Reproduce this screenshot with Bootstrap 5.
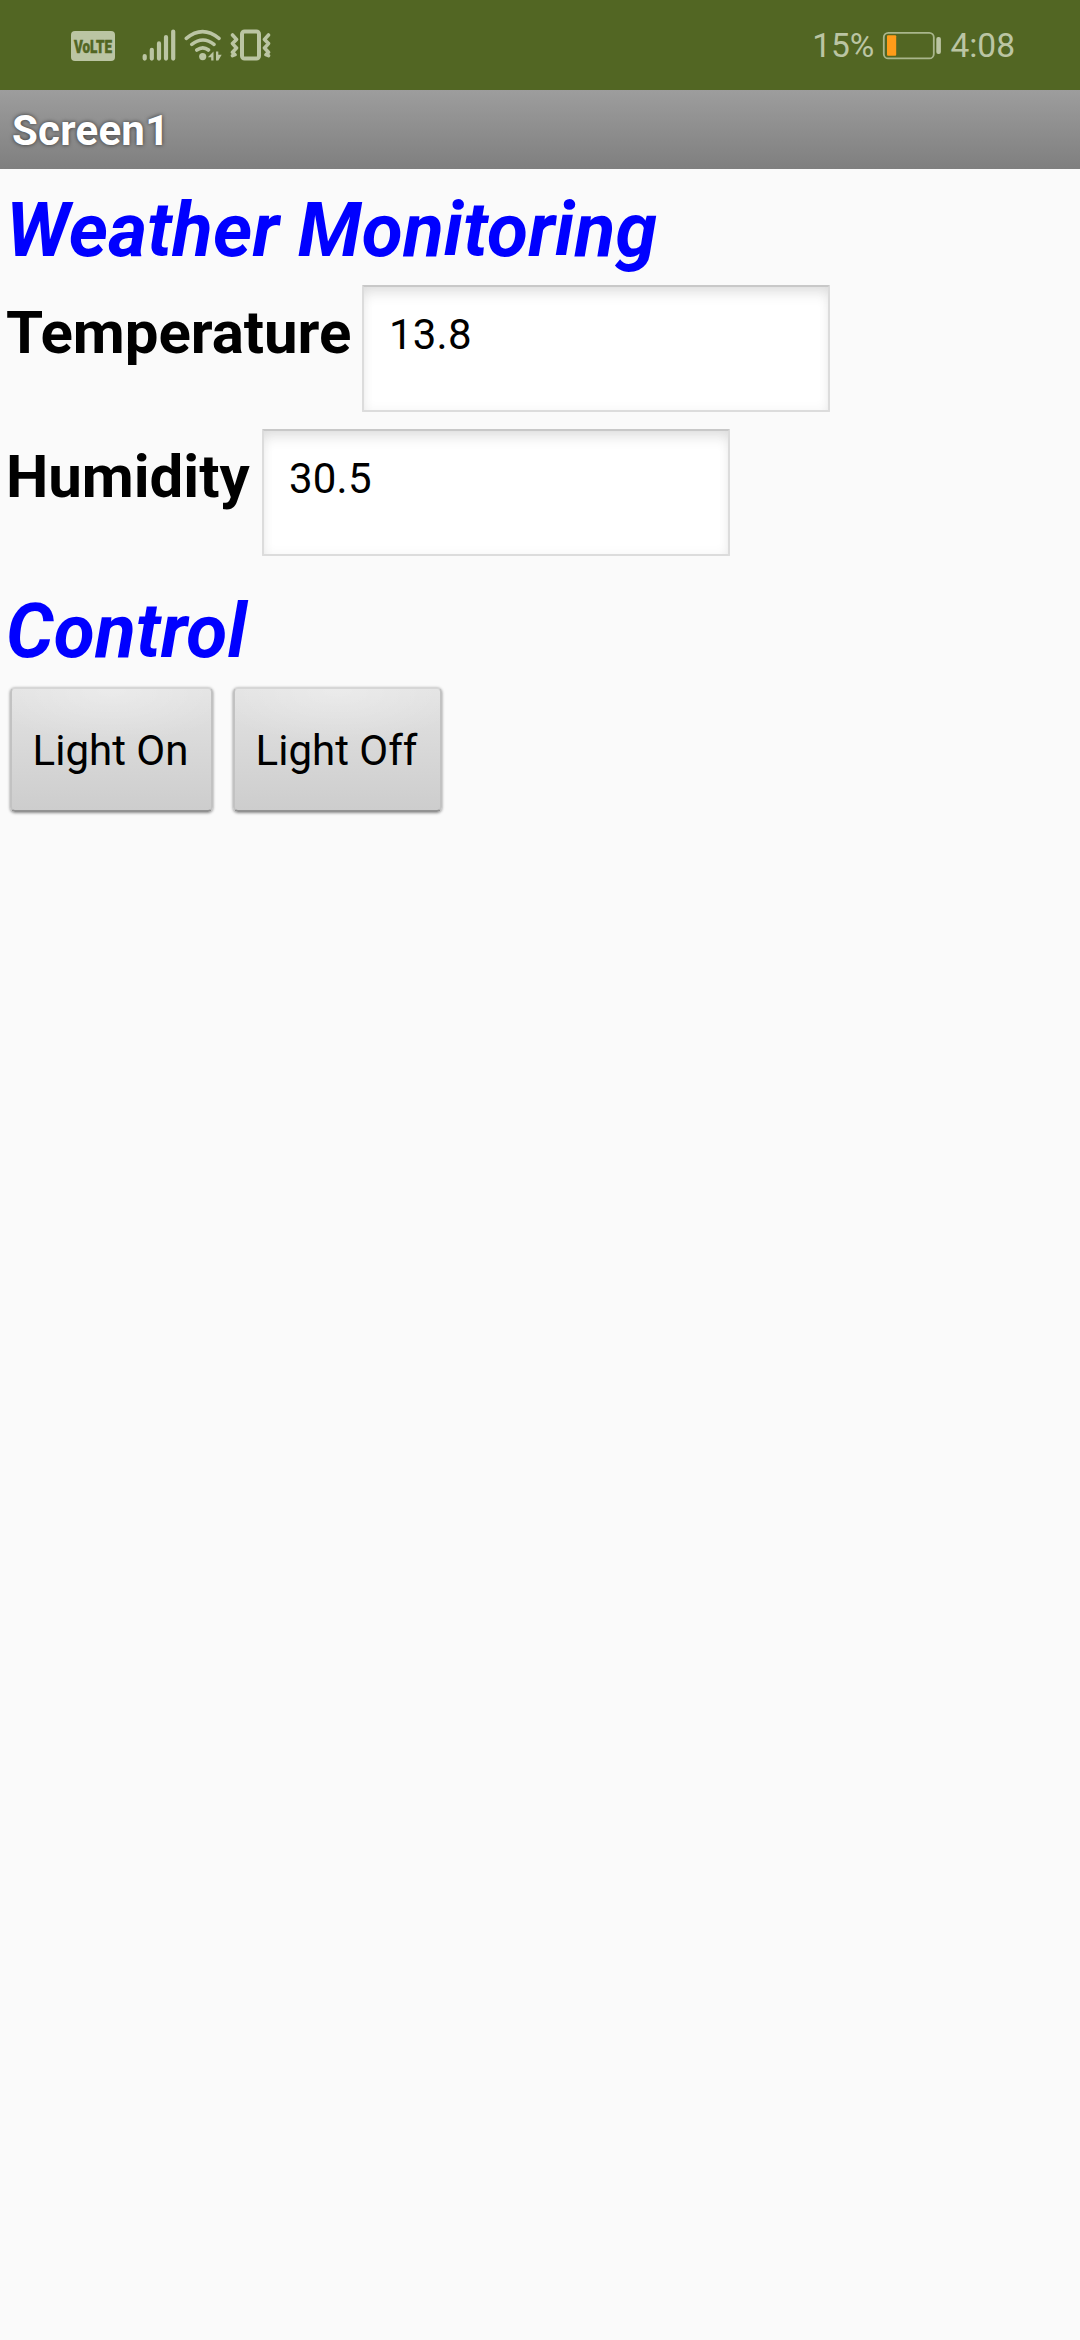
<!DOCTYPE html>
<html lang="en">
<head>
<meta charset="utf-8">
<meta name="viewport" content="width=device-width, initial-scale=1">
<title>Screen1</title>
<link href="https://cdn.jsdelivr.net/npm/bootstrap@5.3.0/dist/css/bootstrap.min.css" rel="stylesheet">
<style>
  body { font-family: Roboto, "Liberation Sans", sans-serif; background: #fafafa; color: #000; min-height: 2340px; }
  .status-bar { height: 90px; background: #526623; color: #bbc5a3; font-size: 33.5px; line-height: 86px; padding: 2px 65px 0 71px; }
  .status-bar svg { display: block; }
  .title-bar { height: 79px; padding: 2px 0 0 12px; background: linear-gradient(#9d9d9d, #7f7f7f); color: #fff; font-size: 42px; line-height: 77px; letter-spacing: .25px; text-shadow: 0 0 4px rgba(0,0,0,.65); }
  .section-title { font-size: 75px; line-height: 88px; color: #00f; margin: 0; padding-left: 6px; letter-spacing: .17px; }
  .first-title { margin-top: 17px; }
  .control-title { margin-top: 15px; }
  .reading { height: 144px; padding-left: 6px; }
  .readings { padding-top: 10px; }
  .reading label { font-size: 60px; line-height: 70px; margin-top: 14px; flex: none; letter-spacing: -.05px; }
  .t-label { width: 356px; }
  .h-label { width: 256px; }
  .reading .form-control { width: 468px; height: 127px; margin-top: 1px; border: 2px solid #dcdcdc; border-top-color: #c8c8c8; border-radius: 1px; background: #fff; font-size: 42px; line-height: 50px; letter-spacing: .2px; padding: 1px 25px 30px 25px; color: #000; box-shadow: inset 0 10px 14px -4px rgba(0,0,0,.11), inset 0 0 12px rgba(0,0,0,.045); }
  .controls { padding: 12px 0 0 10px; gap: 20px; }
  .controls .btn { height: 125px; padding: 2px 2px 0 0; font-size: 42px; line-height: 50px; color: #000; border: 2px solid #c2c2c2; border-top-color: #d6d6d6; border-bottom-color: #929292; border-radius: 5px; background: radial-gradient(ellipse 65% 45% at 50% 0, rgba(255,255,255,.3), rgba(255,255,255,0)), linear-gradient(#e3e3e3, #cdcdcd); box-shadow: 0 1px 3px rgba(0,0,0,.45); }
  .btn-on { width: 203px; }
  .btn-off { width: 209px; }
</style>
</head>
<body>
<header class="status-bar d-flex justify-content-between align-items-center">
  <svg width="202" height="40" viewBox="71 26 202 40" fill="#bbc5a3" stroke="none">
    <rect x="71" y="31" width="44" height="30" rx="4"/>
    <text x="74" y="52.5" font-size="18" font-weight="900" fill="#526623" stroke="#526623" stroke-width=".5" textLength="38" lengthAdjust="spacingAndGlyphs">VoLTE</text>
    <g stroke="#bbc5a3" stroke-width="4.2" stroke-linecap="round" fill="none">
      <path d="M144.7 56v2.6M151.8 49.8v8.8M159 43.4v15.2M166 37v21.6M173.2 31.5v27.1"/>
      <path d="M186.3 38.4Q202.5 24.8 219 38.4M191.8 44.4Q203 35.6 214 44.4M196.8 50Q203 45.6 208.5 50" stroke-width="3.6"/>
      <rect x="242" y="31.5" width="17" height="27" rx="2.5" stroke-width="4"/>
      <path d="M232.5 35l4 4.4-4 4.2 4 4.4-4 4.2 2.5 2.5-2.5 1M268.5 35l-4 4.4 4 4.2-4 4.4 4 4.2-2.5 2.5 2.5 1" stroke-width="3.6" stroke-linejoin="round"/>
    </g>
    <circle cx="202.7" cy="56.6" r="3.6"/>
    <path d="M213.5 51.5v9h-2.3v-3.2h-3.4zM216 51.5h2.3v3.2h3.4l-3.4 5.8H216z"/>
  </svg>
  <div class="d-flex align-items-center">
    <span>15%</span>
    <svg width="60" height="30" viewBox="880 31 60 30" class="ms-2 me-2">
      <rect x="881.8" y="32.8" width="50" height="25.6" rx="4.5" fill="none" stroke="#a9b68c" stroke-width="1.8"/>
      <rect x="885" y="35.3" width="9.2" height="20.5" rx="1" fill="#ff9c19"/>
      <rect x="934.3" y="37" width="4.6" height="17" rx="2" fill="#bbc5a3"/>
    </svg>
    <span>4:08</span>
  </div>
</header>
<div class="title-bar fw-bold">Screen1</div>
<main>
  <h1 class="section-title first-title fw-bold fst-italic">Weather Monitoring</h1>
  <div class="readings">
    <div class="reading d-flex align-items-start">
      <label class="fw-bold t-label" for="temperature">Temperature</label>
      <input class="form-control" id="temperature" type="text" value="13.8">
    </div>
    <div class="reading d-flex align-items-start">
      <label class="fw-bold h-label" for="humidity">Humidity</label>
      <input class="form-control" id="humidity" type="text" value="30.5">
    </div>
  </div>
  <h2 class="section-title control-title fw-bold fst-italic">Control</h2>
  <div class="controls d-flex">
    <button type="button" class="btn btn-on">Light On</button>
    <button type="button" class="btn btn-off">Light Off</button>
  </div>
</main>
<script src="https://cdn.jsdelivr.net/npm/bootstrap@5.3.0/dist/js/bootstrap.bundle.min.js"></script>
</body>
</html>
